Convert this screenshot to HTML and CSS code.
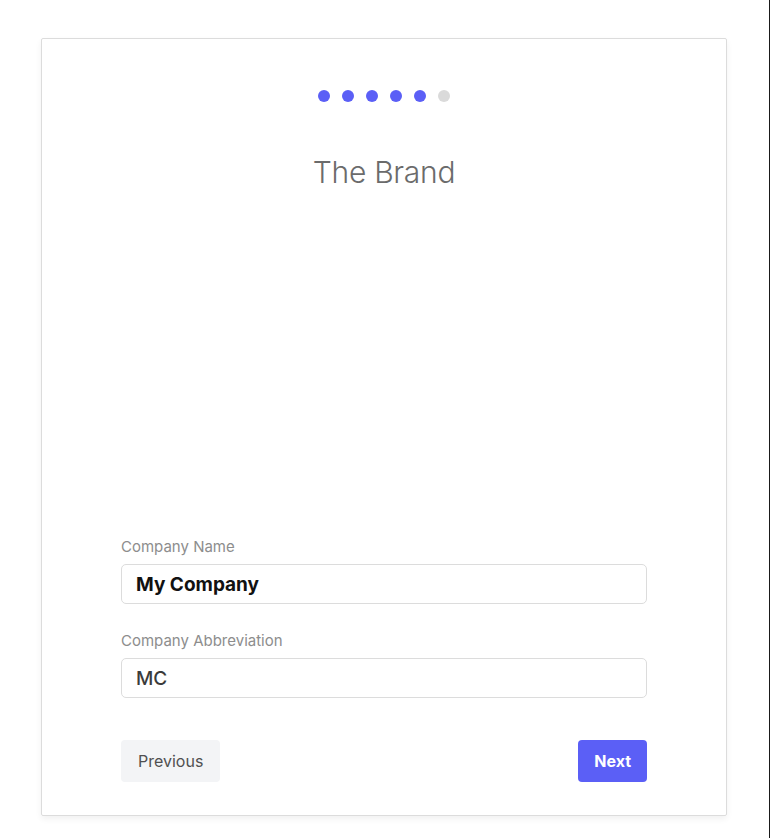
FILE: index.html
```html
<!DOCTYPE html>
<html>
	<head>
		<meta charset="utf-8">
		<title>The Brand</title>
		<link rel="stylesheet" href="styles.css">
	</head>
	<body>
		<div class="page">
			<div class="card">
				<div class="steps">
					<span class="dot on"></span>
					<span class="dot on"></span>
					<span class="dot on"></span>
					<span class="dot on"></span>
					<span class="dot on"></span>
					<span class="dot"></span>
				</div>
				<h1 class="title">The Brand</h1>

				<form class="form">
					<div class="field">
						<label class="label">Company Name</label>
						<div class="input name">My Company</div>
					</div>
					<div class="field">
						<label class="label">Company Abbreviation</label>
						<div class="input">MC</div>
					</div>
					<div class="actions">
						<button type="button" class="btn prev">Previous</button>
						<button type="button" class="btn next">Next</button>
					</div>
				</form>
			</div>
		</div>
	</body>
</html>
```

FILE: styles.css
```css
html, body {
	margin: 0;
	padding: 0;
	background: #fff;
}
.page {
	height: 838px;
	box-sizing: border-box;
	padding: 38px 0 0 41px;
	border-right: 1px solid #1a1a1a;
	font-family: Inter, "Liberation Sans", sans-serif;
}
.card {
	width: 686px;
	height: 778px;
	box-sizing: border-box;
	border: 1px solid #dcdcdc;
	border-radius: 2px;
	box-shadow: 0 3px 6px rgba(0, 0, 0, 0.06);
	padding: 51px 79px 33px 79px;
	display: flex;
	flex-direction: column;
}
.steps {
	display: flex;
	justify-content: center;
	gap: 12px;
}
.dot {
	width: 12px;
	height: 12px;
	border-radius: 50%;
	background: #dadada;
}
.dot.on {
	background: #5b5ff6;
}
.title {
	margin: 52px 0 0 0;
	text-align: center;
	font-size: 30px;
	line-height: 36px;
	font-weight: 300;
	color: #6b6b6b;
	letter-spacing: -0.3px;
}
.form {
	margin-top: auto;
}
.field {
	margin-bottom: 27px;
}
.label {
	display: block;
	font-size: 15px;
	line-height: 20px;
	color: #8d8d8d;
	margin-bottom: 7px;
}
.input {
	height: 40px;
	box-sizing: border-box;
	border: 1px solid #dcdcdc;
	border-radius: 5px;
	padding: 0 14px;
	display: flex;
	align-items: center;
	font-size: 19px;
	font-weight: 500;
	color: #3b3b3b;
}
.input.name {
	font-weight: 700;
	color: #111;
}
.actions {
	display: flex;
	justify-content: space-between;
	margin-top: 42px;
}
.btn {
	height: 42px;
	border: none;
	border-radius: 4px;
	font-family: Inter, "Liberation Sans", sans-serif;
	font-size: 16px;
	padding: 0 17px;
}
.prev {
	background: #f3f4f6;
	color: #505050;
}
.next {
	background: #5b5ff6;
	color: #fff;
	font-weight: 700;
	padding: 0 16px;
}
```
